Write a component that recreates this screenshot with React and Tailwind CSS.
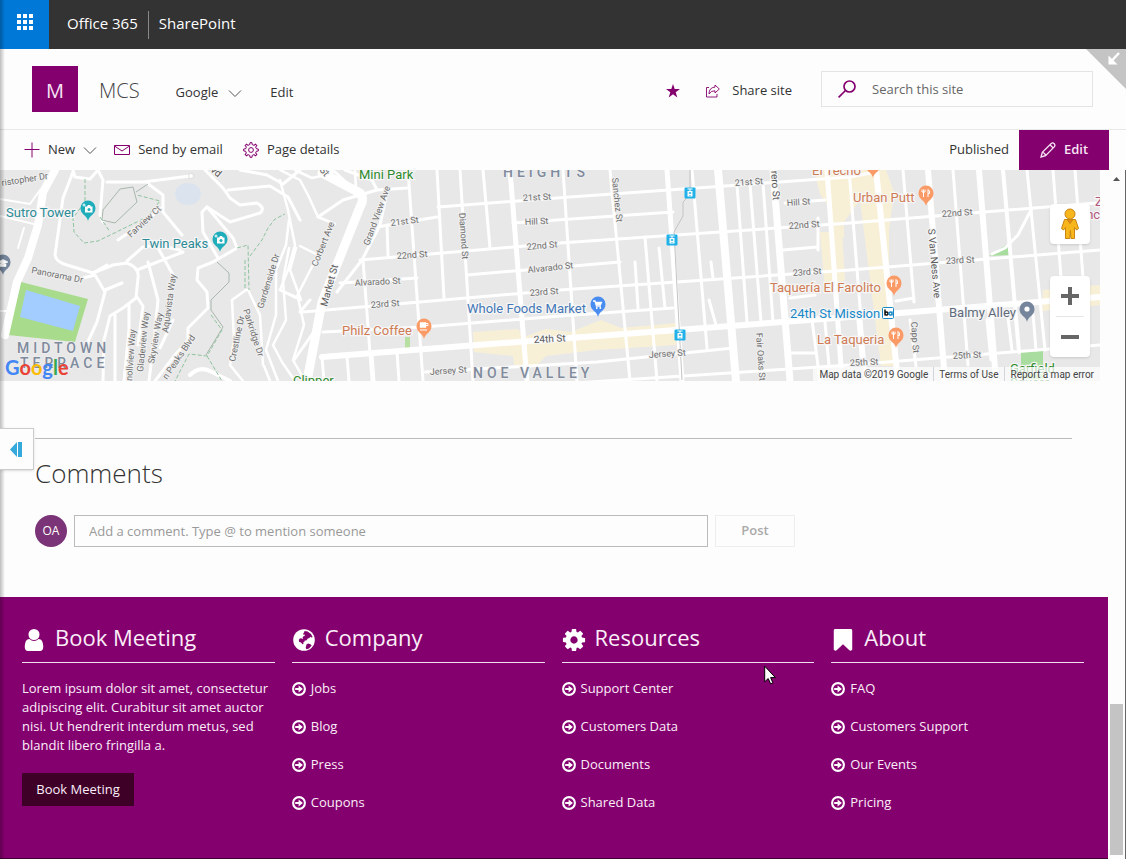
import { useState } from 'react';

const footerLinks = [
    { title: "Company", icon: "globe", links: ["Jobs", "Blog", "Press", "Coupons"] },
    { title: "Resources", icon: "cog", links: ["Support Center", "Customers Data", "Documents", "Shared Data"] },
    { title: "About", icon: "bookmark", links: ["FAQ", "Customers Support", "Our Events", "Pricing"] },
];

const iconPaths = {
    user: "M1536 1399q0 109-62.5 187t-150.5 78h-854q-88 0-150.5-78t-62.5-187q0-85 8.5-160.5t31.5-152 58.5-131 94-89 134.5-34.5q131 128 313 128t313-128q76 0 134.5 34.5t94 89 58.5 131 31.5 152 8.5 160.5zm-256-887q0 159-112.5 271.5t-271.5 112.5-271.5-112.5-112.5-271.5 112.5-271.5 271.5-112.5 271.5 112.5 112.5 271.5z",
    cog: "M1152 896q0-106-75-181t-181-75-181 75-75 181 75 181 181 75 181-75 75-181zm512-109v222q0 12-8 23t-20 13l-185 28q-19 54-39 91 35 50 107 138 10 12 10 25t-9 23q-27 37-99 108t-94 71q-12 0-26-9l-138-108q-44 23-91 38-16 136-29 186-7 28-36 28h-222q-14 0-24.5-8.5t-11.5-21.5l-28-184q-49-16-90-37l-141 107q-10 9-25 9-14 0-25-11-126-114-165-168-7-10-7-23 0-12 8-23 15-21 51-66.5t54-70.5q-27-50-41-99l-183-27q-13-2-21-12.5t-8-23.5v-222q0-12 8-23t19-13l186-28q14-46 39-92-40-57-107-138-10-12-10-24 0-10 9-23 26-36 98.5-107.5t94.5-71.5q13 0 26 10l138 107q44-23 91-38 16-136 29-186 7-28 36-28h222q14 0 24.5 8.5t11.5 21.5l28 184q49 16 90 37l142-107q9-9 24-9 13 0 25 10 129 119 165 170 7 8 7 22 0 12-8 23-15 21-51 66.5t-54 70.5q26 50 41 98l183 28q13 2 21 12.5t8 23.5z",
    bookmark: "M1420 128q23 0 44 9 33 13 52.5 41t19.5 62v1289q0 34-19.5 62t-52.5 41q-19 8-44 8-48 0-83-32l-441-424-441 424q-36 33-83 33-23 0-44-9-33-13-52.5-41t-19.5-62v-1289q0-34 19.5-62t52.5-41q21-9 44-9h1048z",
};

function FooterIcon({ name }) {
    if (name === "globe") {
        return (
            <svg className="h-6 w-6 shrink-0" viewBox="0 0 24 24" aria-hidden="true">
                <circle cx="12" cy="12" r="10.8" fill="#fff" />
                <path fill="#84006e" d="M12.600 3l3 .6 3.400 2.400 1.600 3-1 .4-1.600-.6-.4 1.200-1.800.6-1.400 1.800-1.600.2-.6 1.400-1 .2.4 1.600-1.200.4-1.400-1.600-1.800-.6-.4-2 1-1.600 1.800-.2.6 1 .6-.4-.2-1.600 1.600-1.400 1-.2-.6-1.200-1 .4-.6-.8 1-1.400z" />
                <path fill="#84006e" d="M14.600 16.200l1.800-.8 2.400 1 .8 1-2.600 3-2.600.9-.7-1.700z" />
            </svg>
        );
    }
    return (
        <svg className="h-6 w-6 shrink-0" viewBox="64 64 1664 1664" fill="#fff" aria-hidden="true">
            <path d={iconPaths[name]} />
        </svg>
    );
}

function CircleArrow() {
    return (
        <svg className="h-[14px] w-[14px] shrink-0" viewBox="0 0 14 14" aria-hidden="true">
            <circle cx="7" cy="7" r="5.900" fill="none" stroke="#fff" strokeWidth="2.100" />
            <path d="M3.200 5.900h3.400V3.500L10.900 7l-4.300 3.500V8.100H3.200z" fill="#fff" />
        </svg>
    );
}

function Chevron() {
    return (
        <svg className="h-[14px] w-[14px]" viewBox="0 0 14 14" fill="none" stroke="#555" aria-hidden="true">
            <path d="M1 4.500l6 6 6-6" />
        </svg>
    );
}

function Gear() {
    const teeth = [0, 45, 90, 135, 180, 225, 270, 315];
    return (
        <svg className="h-4 w-4" viewBox="0 0 16 16" fill="none" stroke="#84006e" aria-hidden="true">
            <circle cx="8" cy="8" r="2.400" />
            {teeth.map(a => (
                <path key={a} transform={`rotate(${a} 8 8)`} d="M5.900 2.900L6.800 2.600 7 .7h2l.2 1.900.9.3" />
            ))}
        </svg>
    );
}

// [path, width]
const roads = [
    ["M55 170L43 192L38 225L28 258L17 282L5 335", 8],
    ["M0 199L30 204L40 190M0 216L34 224M24 228L18 248M0 311H8", 2],
    ["M73 170L75 177L90 179L98 170L103 180L100 215L103 222M73 172L63 198L55 255Q56 262 67 265L93 273L113 265L127 263Q140 268 138 278L136 298L123 308L110 316L104 340L103 381", 3],
    ["M107 182L143 182L190 176M147 183L163 195V212L182 235M163 207L147 220L118 240M127 261L143 247L157 245L180 250M137 270L183 252M157 246L173 275", 3],
    ["M83 278L95 275L105 292L97 322L84 350M105 290L122 283M115 315V381M129 305V330L124 381M137 297L143 306L138 345M148 262L158 300L154 340L149 381M173 320L160 348M93 273L107 265", 3],
    ["M155 381L175 355L188 340L188 328L208 308L207 292L197 280L198 268L213 262L237 248L233 238L207 207L202 212L203 232L218 258", 3],
    ["M207 207L230 222L260 213Q266 208 257 203L240 205L230 198L223 188L205 170M228 190L270 186L288 197L300 220M240 170L267 175L283 184L300 170", 3],
    ["M289 220L286 245L276 270L276 315L266 350L278 381M289 248L283 280L286 320L273 345L282 362L295 381M296 248L290 270L301 300M246 290L232 300L234 340L230 365L243 381M248 290L260 315L263 365M264 366L270 381M280 290L298 298L304 325L293 360L305 381", 2.5],
    ["M190 375Q200 365 212 372L230 381", 4],
    ["M280 180L288 210L295 245L288 270L280 290L296 298L318 255L300 246M280 170L300 180L308 195L318 217L335 224M295 170L312 178L325 175M355 170L356 190", 2.5],
    ["M318 217L343 200L377 190L407 188M345 170L372 180L377 190M337 292L362 260L380 225L387 192M322 170L335 172L361 196", 3],
    ["M322 173L360 193Q365 199 360 207L322 302L307 381", 9],
    ["M387 225L388 255M363 260L372 380M408 170L423 381M437 170L444 298M347 357L349 381M372 354L374 381M397 352L399 381M322 357L324 381M294 360L318 326M300 312L310 300", 3],
    ["M460 170L473 381M483 170L490 248M563 170L577 381M610 170L630 381M635 262L638 308M645 237L657 381M659 248L665 308M692 170L707 348M709 300L716 325M711 262L713 278M737 185L747 322M750 184L761 322M763 183L773 322", 3],
    ["M510 170L527 381M672 240L682 381M827 170L841 366", 5],
    ["M667 170L672 240", 5],
    ["M718 170L736 381", 8],
    ["M773 170L790 381", 7],
    ["M438 207L570 197L850 177L876 172M377 227L437 217M360 260L560 243L850 223L1096 203", 3],
    ["M513 223L673 212M340 283L417 278M467 275L620 262M785 203L825 200M783 250L817 247M818 218V250", 3],
    ["M303 312L560 290L850 270L1100 250M323 332L423 327L560 316L673 308", 3],
    ["M322 357L570 338L850 317L1100 297", 6],
    ["M425 372L597 362L733 348M790 353L816 353M790 298L815 295", 3],
    ["M560 384L850 365L1100 345", 3],
    ["M849 170L866 381M903 170L914 302M953 170L968 365M1027 170L1045 350M1053 170L1066 345M1075 170L1088 345M910 320L916 366M812 320L820 381M858 320L862 366M825 322L829 366M987 320L991 360M1008 318L1012 350M1033 314L1036 350M896 301L914 298", 3],
    ["M876 170L898 381M928 170L945 381M979 170L996 381", 6],
    ["M1003 170L1019 352", 4],
    ["M1032 208L1018 235L1005 248L992 254", 3],
];

const grayLabels = [
    ["ristopher Dr", 2, 186, -9],
    ["Farview Ct", 131, 238, -43],
    ["Panorama Dr", 31, 273, 11],
    ["Aquavista Way", 168, 333, -82],
    ["Gladeview Way", 143, 372, -84],
    ["Skyview Way", 154, 364, -80],
    ["nollview Way", 132, 381, -86],
    ["n Peaks Blvd", 167, 380, -56],
    ["Crestline Dr", 235, 362, -78],
    ["Parkridge Dr", 243, 310, 72],
    ["Gardenside Dr", 263, 309, -73],
    ["Corbert Ave", 317, 267, -68],
    ["Grand View Ave", 369, 246, -70],
    ["21st St", 391, 226, -7],
    ["22nd St", 397, 259, -4],
    ["Alvarado St", 355, 286, -3],
    ["23rd St", 371, 308, -4],
    ["Diamond St", 459, 213, 86],
    ["21st St", 523, 201, -3],
    ["Hill St", 525, 225, -3],
    ["22nd St", 527, 250, -5],
    ["Alvarado St", 528, 273, -6],
    ["23rd St", 530, 296, -4],
    ["Jersey St", 430, 375, -4],
    ["Sanchez St", 612, 178, 84],
    ["Jersey St", 649, 358, -4],
    ["21st St", 735, 186, -4],
    ["Hill St", 787, 206, -4],
    ["22nd St", 789, 229, -4],
    ["23rd St", 793, 276, -4],
    ["Fair Oaks St", 756, 333, 86],
    ["22nd St", 942, 217, -4],
    ["23rd St", 946, 264, -3],
    ["25th St", 850, 366, -3],
    ["25th St", 953, 359, -3],
    ["Capp St", 911, 322, 86],
];

function Pin({ x, y, color, children }) {
    return (
        <g transform={`translate(${x} ${y})`}>
            <path d="M0 11C-1 5-7.500 5-7.500-2a7.500 7.500 0 1 1 15 0C7.500 5 1 5 0 11z" fill={color} />
            <g stroke="#fff" fill="none" strokeWidth="1.300">{children}</g>
        </g>
    );
}

function Place({ x, y, color, children }) {
    return (
        <text x={x} y={y} fontSize="13" fill={color} stroke="#f6f6f6" strokeWidth="2.500" paintOrder="stroke">{children}</text>
    );
}

function Fork() {
    return <path d="M-2.500-5.500v7.500M-4-5.500v2.500h3v-2.500M2 2v-7.500q2 1 1.500 4h-1.500" strokeWidth="1" />;
}

function Camera() {
    return (
        <>
            <path d="M-3-3.500h2l1-1.500h2l1 1.500h1.500v6h-7.500z" fill="#fff" stroke="none" />
            <circle cx="1" cy="-.5" r="1.500" fill="#1fadbb" stroke="none" />
            <path d="M-4-6.500v3M-5.500-5h3" strokeWidth="1" />
        </>
    );
}

function Tram({ x, y }) {
    return (
        <g transform={`translate(${x} ${y})`}>
            <rect x="-5.500" y="-5.500" width="11" height="11" rx="1" fill="#1fb1e8" />
            <path d="M-2.500-4h5M0-4v2" stroke="#fff" />
            <path d="M-2.500-2h5v5.500h-5z" fill="#fff" />
            <path d="M-1.200-.8h2.400v1.600h-2.400zM-.5 2h1v1h-1z" fill="#1fb1e8" />
        </g>
    );
}

function MapPanel() {
    return (
        <div className="relative mr-2 overflow-hidden">
            <svg className="block h-auto w-full font-[Roboto,sans-serif]" viewBox="0 170 1100 211" role="img" aria-label="Map">
                <rect x="0" y="170" width="1100" height="211" fill="#e8e8e8" />
                <g fill="#f8f0d6">
                    <path d="M473 332l45-3 6 8 22-8 25 3 30-12 20 8 55-5v22l-80 5-50 6-10 10-22-1-1-9-39-4z" />
                    <path d="M814 170h72l8 22-5 38v100l8 36h-16l-21-166-16 22v16l-10-2-6-30-8-12z" />
                    <path d="M820 232h22l3 48-20 10zM1043 290l57-5v20l-58 6z" />
                </g>
                <path d="M21 282L88 299L75 342L8 335z" fill="#a8dc8c" />
                <path d="M26 290L80 306L73 331L20 317z" fill="#a3ccff" />
                <ellipse cx="188" cy="194" rx="13" ry="11" fill="#dbe4ee" />
                <path d="M989 256l20-13 2 12zM1021 352l22-2v31h-22z" fill="#a9dda0" />
                <path d="M405 337h5v11h-5z" fill="#b7dfa0" />
                {roads.map(([d, w]) => (
                    <path key={d} d={d} stroke="#fff" strokeWidth={w} fill="none" strokeLinejoin="round" strokeLinecap="round" />
                ))}
                <path d="M690 170V195L683 202V216L674 232L675 250L682 380" stroke="#c4c4c4" fill="none" />
                <path d="M103 210L120 189L133 187L137 202L115 223L102 220zM136 192L148 184M217 262L229 273L229 282L211 300V310L223 327L206 355" stroke="#a9b7ac" fill="none" />
                <path d="M85 179V202L73 218L74 232L84 243L98 241L147 217L160 201L137 195M100 217L110 232M237 248L248 245L249 290M245 260V290M250 256L262 240L268 228L275 219L285 214M211 315L222 330L207 356L189 354L175 381M207 356L222 381" stroke="#8fc3a0" strokeDasharray="4 2" fill="none" />
                <circle cx="191" cy="176" r="2.500" fill="#fff" stroke="#ccc" strokeWidth=".6" />

                {grayLabels.map(([label, x, y, angle]) => (
                    <text key={label + x} x={x} y={y} fontSize="9" fill="#6f6f6f" stroke="#f0f0f0" strokeWidth="2" paintOrder="stroke" transform={`rotate(${angle} ${x} ${y})`}>{label}</text>
                ))}
                <g fontSize="10" fill="#5b5b5b" stroke="#f6f6f6" strokeWidth="2" paintOrder="stroke">
                    <text x="327" y="307" transform="rotate(-75 327 307)">Market St</text>
                    <text x="534" y="343" transform="rotate(-3 534 343)">24th St</text>
                    <text x="928" y="229" transform="rotate(85 928 229)">S Van Ness Ave</text>
                    <text x="771" y="171" transform="rotate(86 771 171)">rero St</text>
                    <text x="210" y="171" transform="rotate(40 210 171)">vd</text>
                    <text x="319" y="170" transform="rotate(50 319 170)">St</text>
                </g>
                <g fontSize="14" fontWeight="500" fill="#7f8b9d" stroke="#f0f0f0" strokeWidth="1.500" paintOrder="stroke" letterSpacing="4">
                    <text x="17" y="353">MIDTOWN</text>
                    <text x="20" y="368">TERRACE</text>
                    <text x="503" y="177">HEIGHTS</text>
                    <text x="473" y="378">NOE VALLEY</text>
                </g>

                <Place x="6" y="217" color="#2d8a97">Sutro Tower</Place>
                <Place x="142" y="248" color="#2d8a97">Twin Peaks</Place>
                <Place x="359" y="179" color="#2f8a2d">Mini Park</Place>
                <Place x="293" y="385" color="#2f8a2d">Clipper</Place>
                <Place x="342" y="335" color="#cf7b54">Philz Coffee</Place>
                <Place x="467" y="313" color="#4376b5">Whole Foods Market</Place>
                <Place x="812" y="175" color="#cf7b54">El Techo</Place>
                <Place x="853" y="202" color="#cf7b54">Urban Putt</Place>
                <Place x="770" y="292" color="#cf7b54">Taquería El Farolito</Place>
                <Place x="790" y="318" color="#1689c8">24th St Mission</Place>
                <Place x="817" y="344" color="#cf7b54">La Taqueria</Place>
                <Place x="949" y="317" color="#5f6b7b">Balmy Alley</Place>
                <Place x="1010" y="373" color="#2f8a2d">Garfield</Place>
                <Place x="1010" y="387" color="#2f8a2d">Square</Place>
                <Place x="1095" y="206" color="#b3587c">Z</Place>
                <Place x="1083" y="219" color="#b3587c">inc</Place>

                <Pin x={88} y={210} color="#1fadbb"><Camera /></Pin>
                <Pin x={220} y={241} color="#1fadbb"><Camera /></Pin>
                <Pin x={3} y={264} color="#75859c"><path d="M-5-2l5-2.500 5 2.500-5 2.500zM-3 0v2.500h6V0" fill="#fff" strokeWidth=".6" /></Pin>
                <Pin x={424} y={328} color="#fa9a66"><path d="M-3.500-5h5v4h-5z" fill="#fff" /><path d="M2-4.500h2v2h-2M-4 2h7" strokeWidth="1" /></Pin>
                <Pin x={598} y={306} color="#4a8df0"><path d="M-5-5h2l1.500 5h4.500" /><path d="M-2.500-4h6.500l-1.200 3h-4.300z" fill="#fff" strokeWidth=".5" /><path d="M-1.200 2v.1M2.300 2v.1" strokeLinecap="round" strokeWidth="1.800" /></Pin>
                <Pin x={873} y={167} color="#fa9a66"><Fork /></Pin>
                <Pin x={926} y={195} color="#fa9a66"><Fork /></Pin>
                <Pin x={894} y={285} color="#fa9a66"><Fork /></Pin>
                <Pin x={896} y={337} color="#fa9a66"><Fork /></Pin>
                <Pin x={1027} y={311} color="#75859c"><circle cx="0" cy="-2" r="2.600" fill="#fff" stroke="none" /></Pin>
                <Tram x={690} y={193} />
                <Tram x={672} y={240} />
                <Tram x={680} y={335} />
                <rect x="882.500" y="307.500" width="11" height="11" rx="1" fill="#fff" stroke="#1689c8" />
                <path d="M885 309.500v6M885 313.500a1.500 1.500 0 1 1 0 .1" fill="none" stroke="#111" strokeWidth="1.500" />
                <path d="M892 311.500v4M889 313.500a1.500 1.500 0 1 1 0 .1" fill="none" stroke="#1689c8" strokeWidth="1.500" />
            </svg>

            <div className="absolute bottom-0 left-[5px] font-[Lato,sans-serif] text-[20px] leading-7 font-bold">
                <span className="text-[#4285f4]">G</span>
                <span className="text-[#ea4335]">o</span>
                <span className="text-[#fbbc05]">o</span>
                <span className="text-[#4285f4]">g</span>
                <span className="text-[#34a853]">l</span>
                <span className="text-[#ea4335]">e</span>
            </div>

            <div className="absolute top-[34px] right-[10px] flex flex-col gap-8">
                <button aria-label="Street View" className="flex h-10 w-10 items-center justify-center rounded-sm bg-white shadow">
                    <svg className="h-8 w-5" viewBox="0 0 20 32" fill="#f6b61c" stroke="#c98510" aria-hidden="true">
                        <path d="M4.500 11.500h11l3 9-2 1.500-2-2.500v11h-3.500l-.6-8-.6 8H5.500v-11l-2 2.500-2-1.500z" />
                        <path d="M7 11.500l3 4 3-4z" fill="#e68a1c" />
                        <circle cx="10" cy="6" r="5" />
                    </svg>
                </button>
                <div className="flex h-[81px] w-10 flex-col items-center rounded-sm bg-white shadow">
                    <button aria-label="Zoom in" className="flex h-10 w-10 items-center justify-center">
                        <svg className="h-[18px] w-[18px]" viewBox="0 0 18 18" fill="#666" aria-hidden="true"><path d="M7 0h4v7h7v4h-7v7H7v-7H0V7h7z" /></svg>
                    </button>
                    <div className="h-px w-7 bg-[#e6e6e6]" />
                    <button aria-label="Zoom out" className="flex h-10 w-10 items-center justify-center">
                        <svg className="h-[18px] w-[18px]" viewBox="0 0 18 18" fill="#666" aria-hidden="true"><path d="M0 7h18v4H0z" /></svg>
                    </button>
                </div>
            </div>

            <div className="absolute right-0 bottom-0 flex h-[14px] items-center divide-x divide-gray-300 bg-white/70 font-[Roboto,sans-serif] text-[10px] text-[#444]">
                <span className="pr-[5px] pl-[6px]">Map data ©2019 Google</span>
                <a href="#terms" className="px-[5px]">Terms of Use</a>
                <a href="#report" className="px-[6px]">Report a map error</a>
            </div>
        </div>
    );
}

function App() {
    const [comment, setComment] = useState("");
    const [search, setSearch] = useState("");

    return (
        <div className="relative flex min-h-screen flex-col bg-[#fdfdfd] font-['Open_Sans',sans-serif] text-[13px] text-[#333]">
            <header className="flex h-[49px] items-start bg-[#333] text-[15px] text-white">
                <button aria-label="App launcher" className="flex h-[49px] w-[49px] justify-center bg-[#0078d7] pt-[14px]">
                    <svg className="h-4 w-4" viewBox="0 0 16 16" fill="#fff" aria-hidden="true">
                        {[0, 6, 12].map(y => [0, 6, 12].map(x => <rect key={x + "-" + y} x={x} y={y} width="4" height="4" />))}
                    </svg>
                </button>
                <div className="ml-[18px] flex items-start pt-[11px] leading-6">
                    <a href="#office">Office 365</a>
                    <span className="mx-[10px] h-7 w-px bg-[#888]" />
                    <a href="#sharepoint">SharePoint</a>
                </div>
            </header>

            <div className="flex h-[81px] items-center border-b border-[#e8e8e8] pr-[33px] pl-8">
                <a href="#site" className="flex h-[46px] w-[46px] items-center justify-center bg-[#84006e] pt-1 text-[20px] text-[#f7e3f4]">M</a>
                <a href="#site" className="ml-[21px] pt-1 text-[20px] font-light text-[#444]">MCS</a>
                <nav className="ml-9 flex items-center gap-7 pt-2">
                    <button className="flex items-center gap-[10px]">Google <Chevron /></button>
                    <a href="#edit-nav">Edit</a>
                </nav>
                <div className="ml-auto flex items-center">
                    <button aria-label="Following" className="mr-[26px] pt-1">
                        <svg className="h-[14px] w-[14px]" viewBox="0 0 14 14" fill="#84006e" aria-hidden="true">
                            <path d="M7 0l1.700 5.100H14L9.700 8.300l1.600 5.200L7 10.300l-4.300 3.200 1.600-5.200L0 5.100h5.300z" />
                        </svg>
                    </button>
                    <button className="mr-[29px] flex items-center gap-3 pt-1">
                        <svg className="h-[14px] w-[14px]" viewBox="0 0 14 14" fill="none" stroke="#84006e" aria-hidden="true">
                            <path d="M3 3.500H.5v9.500h10.500v-3M9 1l4.300 4L9 9V6.800Q5 6.500 3 10q0-6.500 6-6.900z" strokeWidth=".9" />
                        </svg>
                        Share site
                    </button>
                    <label className="flex h-9 w-[272px] items-center gap-4 border border-[#e4e4e4] pl-4">
                        <svg className="h-[18px] w-[18px] shrink-0" viewBox="0 0 18 18" fill="none" stroke="#84006e" strokeWidth="1.700" aria-hidden="true">
                            <circle cx="11.500" cy="6.500" r="5.500" />
                            <path d="M7.500 10.500L.6 17.400" />
                        </svg>
                        <input type="text" aria-label="Search this site" placeholder="Search this site" value={search} onChange={e => setSearch(e.target.value)}
                            className="w-full min-w-0 bg-transparent pt-[2px] outline-none placeholder:text-[#666]" />
                    </label>
                </div>
            </div>

            <div className="flex h-10 items-center pr-[17px] pl-6">
                <button className="flex items-center gap-2">
                    <svg className="h-4 w-4" viewBox="0 0 16 16" stroke="#84006e" aria-hidden="true"><path d="M8 .5v15M.5 7.500h15" /></svg>
                    New <Chevron />
                </button>
                <button className="ml-[17px] flex items-center gap-2">
                    <svg className="h-4 w-4" viewBox="0 0 16 16" fill="none" stroke="#84006e" aria-hidden="true">
                        <path d="M.5 3.500h15v9H.5zM.5 4L8 9l7.500-5" />
                    </svg>
                    Send by email
                </button>
                <button className="ml-5 flex items-center gap-2"><Gear /> Page details</button>
                <span className="ml-auto mr-[10px]">Published</span>
                <button className="flex h-10 w-[90px] items-center justify-center gap-2 bg-[#84006e] font-semibold text-[#f7e3f4]">
                    <svg className="h-4 w-4" viewBox="0 0 16 16" fill="none" stroke="currentColor" strokeWidth="1.300" aria-hidden="true">
                        <path d="M1 15l1.300-4.600L11.200 1.500q1.700-1.200 3 .2t.2 3L5.600 13.700zM10 2.800l3.200 3.200M2.300 10.400q2.600.4 3.300 3.300" />
                    </svg>
                    Edit
                </button>
            </div>

            <div className="flex flex-1">
                <main className="flex min-w-0 flex-1 flex-col">
                    <MapPanel />

                    <section className="mt-[57px] mr-9 ml-[35px] border-t border-[#bbb] pb-[50px]">
                        <h2 className="mt-[14px] text-[26px] leading-10 font-light">Comments</h2>
                        <div className="mt-[22px] flex items-center gap-[7px]">
                            <span className="flex h-8 w-8 items-center justify-center rounded-full bg-[#7b3477] text-xs text-white">OA</span>
                            <input type="text" aria-label="Add a comment" placeholder="Add a comment. Type @ to mention someone" value={comment} onChange={e => setComment(e.target.value)}
                                className="h-8 w-[634px] border border-[#bbb] px-[14px] outline-none placeholder:text-[#999]" />
                            <button className="h-8 w-20 border border-[#eee] font-semibold text-[#aaa]">Post</button>
                        </div>
                    </section>

                    <footer className="grid flex-1 grid-cols-4 gap-[17px] border-b border-[#40002f] bg-[#84006e] pt-6 pr-6 pl-[22px] text-[#fbeef9]">
                        <div>
                            <h3 className="flex h-[42px] items-start gap-[9px] border-b border-[#f3dff0] text-[22px] leading-8">
                                <span className="pt-[7px]"><FooterIcon name="user" /></span>Book Meeting
                            </h3>
                            <p className="mt-4 mb-[18px] leading-[19px]">Lorem ipsum dolor sit amet, consectetur adipiscing elit. Curabitur sit amet auctor nisi. Ut hendrerit interdum metus, sed blandit libero fringilla a.</p>
                            <button className="h-[33px] w-28 bg-[#3f0028]">Book Meeting</button>
                        </div>
                        {footerLinks.map(col => (
                            <div key={col.title}>
                                <h3 className="flex h-[42px] items-start gap-[9px] border-b border-[#f3dff0] text-[22px] leading-8">
                                    <span className="pt-[7px]"><FooterIcon name={col.icon} /></span>{col.title}
                                </h3>
                                <ul className="mt-4 flex flex-col gap-[19px] leading-[19px]">
                                    {col.links.map(link => (
                                        <li key={link}>
                                            <a href="#link" className="flex items-center gap-[5px]"><CircleArrow />{link}</a>
                                        </li>
                                    ))}
                                </ul>
                            </div>
                        ))}
                    </footer>
                </main>

                {/* scrollbar */}
                <div className="flex w-[18px] flex-col items-center border-r border-[#666] pt-[7px] pb-1">
                    <svg className="h-1 w-[7px]" viewBox="0 0 7 4" fill="#555" aria-hidden="true"><path d="M0 4L3.500 0 7 4z" /></svg>
                    <div className="mt-auto h-[151px] w-[13px] bg-[#c4c4c4]" />
                </div>
            </div>

            {/* page edge shadow */}
            <div className="pointer-events-none absolute inset-y-0 left-0 w-[5px] bg-linear-to-r from-black/25 to-transparent" />

            <button aria-label="Collapse panel" className="absolute top-[428px] left-0 flex h-[42px] w-[34px] items-center border border-l-0 border-[#ccc] bg-[#fdfdfd] pl-[10px] shadow">
                <svg className="h-[15px] w-3" viewBox="0 0 12 15" fill="#35a8dc" aria-hidden="true"><path d="M0 7.500L7 0v15zM8 0h4v15H8z" /></svg>
            </button>

            <button aria-label="Exit full screen" className="absolute top-[49px] right-0 h-10 w-10">
                <svg className="h-10 w-10" viewBox="0 0 40 40" aria-hidden="true">
                    <path d="M0 0h40v40z" fill="#c4c4c4" />
                    <path d="M33 4L26 11.500" stroke="#fff" strokeWidth="2.500" />
                    <path d="M22.500 6.500v9h9z" fill="#fff" />
                </svg>
            </button>

            <svg className="pointer-events-none absolute top-[665px] left-[764px] h-5 w-3" viewBox="0 0 12 20" fill="#fff" stroke="#000" aria-hidden="true">
                <path d="M.7 1.200v15.600l3.500-3.300 2.400 5.300 2.300-1-2.300-5.200h4.800z" />
            </svg>
        </div>
    );
}

export default App;
